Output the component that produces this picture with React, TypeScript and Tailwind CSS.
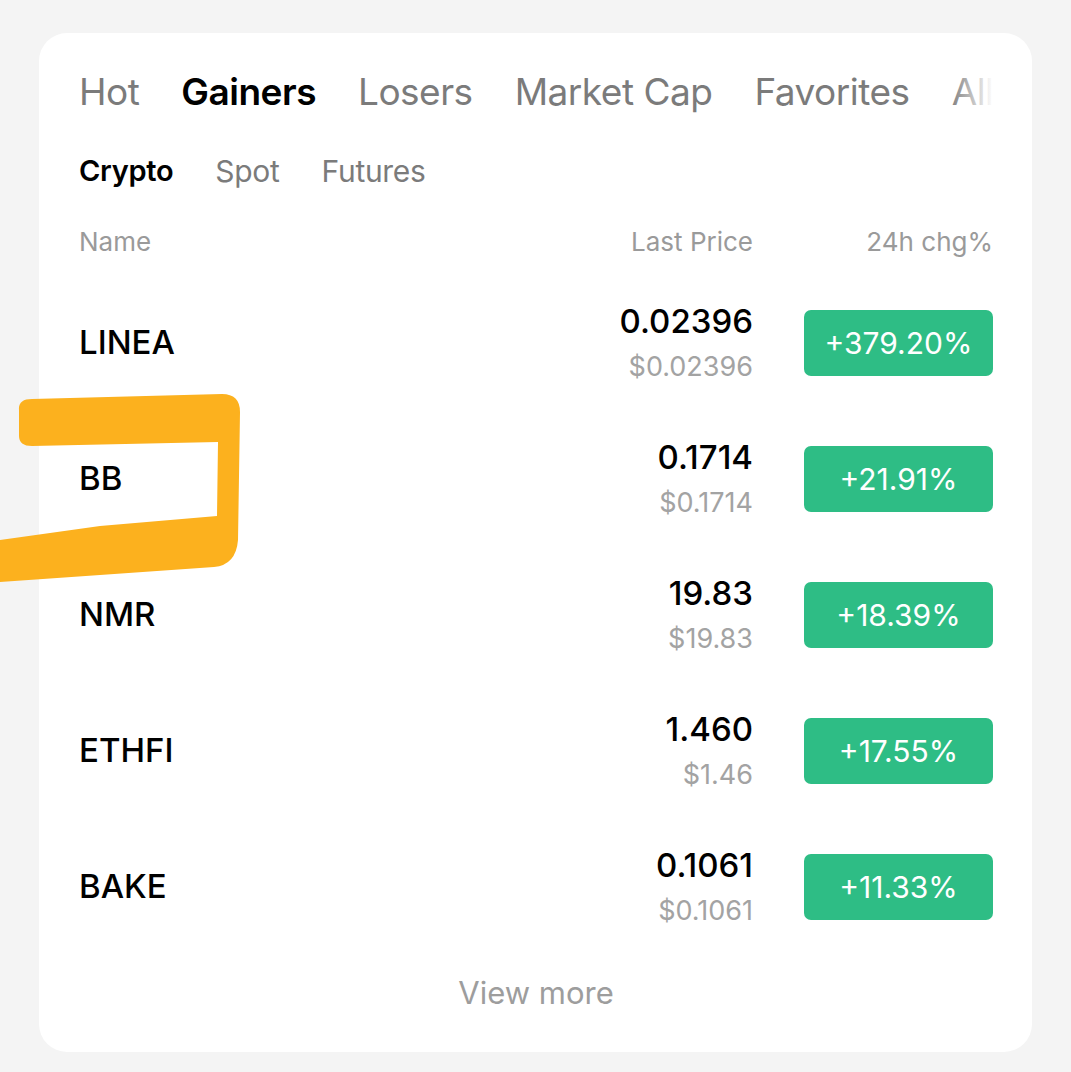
import { useState } from "react";

type Row = {
  name: string;
  price: string;
  usd: string;
  change: string;
};

const rows: Row[] = [
  { name: "LINEA", price: "0.02396", usd: "$0.02396", change: "+379.20%" },
  { name: "BB", price: "0.1714", usd: "$0.1714", change: "+21.91%" },
  { name: "NMR", price: "19.83", usd: "$19.83", change: "+18.39%" },
  { name: "ETHFI", price: "1.460", usd: "$1.46", change: "+17.55%" },
  { name: "BAKE", price: "0.1061", usd: "$0.1061", change: "+11.33%" }
];

const tabs = ["Hot", "Gainers", "Losers", "Market Cap", "Favorites", "All"];
const markets = ["Crypto", "Spot", "Futures"];

export default function App() {
  const [tab, setTab] = useState("Gainers");
  const [market, setMarket] = useState("Crypto");

  return (
    <main
      className="relative min-h-screen w-[1071px] bg-[#f4f4f4] px-[39px] pt-[33px] pb-[20px]"
      style={{ fontFamily: "Inter, 'Liberation Sans', sans-serif" }}
    >
      <section className="flex h-[1019px] w-[993px] flex-col rounded-[28px] bg-white pl-[40px] pr-[39px] pt-[34px]">
        <div className="relative flex h-[50px] items-center gap-[42px] overflow-hidden whitespace-nowrap">
          {tabs.map((t) => (
            <button
              key={t}
              type="button"
              onClick={() => setTab(t)}
              className={
                t === tab
                  ? "text-[37px] font-semibold tracking-[-0.5px] text-black"
                  : "text-[37px] font-normal tracking-[-0.5px] text-[#7b7b7b]"
              }
            >
              {t}
            </button>
          ))}
          <div className="pointer-events-none absolute right-0 top-0 h-full w-[44px] bg-gradient-to-r from-white/0 to-white" />
        </div>

        <div className="mt-[34px] flex h-[40px] items-center gap-[42px]">
          {markets.map((m) => (
            <button
              key={m}
              type="button"
              onClick={() => setMarket(m)}
              className={
                m === market
                  ? "text-[29px] font-semibold tracking-[-0.3px] text-black"
                  : "text-[30px] font-normal tracking-[-0.3px] text-[#7b7b7b]"
              }
            >
              {m}
            </button>
          ))}
        </div>

        <div className="mt-[33px] flex h-[34px] items-center text-[26px] text-[#9a9a9a]">
          <span className="flex-1">Name</span>
          <span className="w-[240px] text-right">Last Price</span>
          <span className="w-[240px] text-right">24h chg%</span>
        </div>

        <div className="mt-[17px] flex flex-col">
          {rows.map((r) => (
            <div key={r.name} className="flex h-[136px] items-center">
              <span className="flex-1 text-[33px] font-medium text-black">{r.name}</span>
              <div className="flex flex-col items-end">
                <span className="text-[33px] font-medium leading-[48px] text-black">{r.price}</span>
                <span className="text-[27px] leading-[44px] text-[#a3a3a3]">{r.usd}</span>
              </div>
              <div className="ml-[51px] flex h-[66px] w-[189px] items-center justify-center rounded-[7px] bg-[#2ebd85] text-[30px] text-white">
                {r.change}
              </div>
            </div>
          ))}
        </div>

        <button type="button" className="mx-auto mt-[15px] h-[40px] text-[31px] text-[#9d9d9d]">
          View more
        </button>
      </section>

      <svg
        className="pointer-events-none absolute left-0 top-0"
        width="260"
        height="600"
        viewBox="0 0 260 600"
        aria-hidden="true"
      >
        <path
          d="M19 410 Q18 399 32 399 L222 394 Q240 394 240 412 L238 540 Q236 565 214 567 L100 575 L0 582 L0 540 L100 526 L217 516 L218 442 L32 446 Q19 446 19 436 Z"
          fill="#fcb11e"
        />
      </svg>
    </main>
  );
}
